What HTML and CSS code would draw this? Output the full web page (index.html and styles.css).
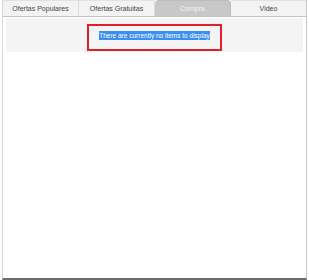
FILE: index.html
```html
<!DOCTYPE html>
<html lang="es">
<head>
    <meta charset="UTF-8">
    <title>Ofertas</title>
    <link rel="stylesheet" href="styles.css">
</head>
<body>
    <div class="panel">
        <ul class="tabs">
            <li class="tab">Ofertas Populares</li>
            <li class="tab">Ofertas Gratuitas</li>
            <li class="tab active">Compra</li>
            <li class="tab">Video</li>
        </ul>
        <div class="content">
            <div class="strip">
                <div class="empty-box">
                    <span class="selected">There are currently no items to display</span>
                </div>
            </div>
        </div>
    </div>
</body>
</html>
```

FILE: styles.css
```css
* {
    margin: 0;
    padding: 0;
    box-sizing: border-box;
}

body {
    font-family: 'Liberation Sans', Arial, sans-serif;
    background: #fff;
    width: 309px;
    height: 280px;
    overflow: hidden;
}

.panel {
    margin: 0 2px;
    height: 280px;
    border-left: 1px solid #d8d8d8;
    border-right: 1px solid #c8c8c8;
    border-bottom: 2px solid #6d6d6d;
    display: flex;
    flex-direction: column;
}

.tabs {
    list-style: none;
    display: flex;
    height: 17px;
    border-bottom: 1px solid #c4c4c4;
}

.tab {
    flex: 1;
    display: flex;
    align-items: center;
    justify-content: center;
    font-size: 7px;
    color: #444;
    background: #f3f3f3;
    border-right: 1px solid #dcdcdc;
    border-top: 1px solid #e2e2e2;
    white-space: nowrap;
}

.tab:last-child {
    border-right: none;
}

.tab.active {
    background: #c8c8c8;
    color: #f4f4f4;
    border-radius: 4px 4px 0 0;
    border-color: #bdbdbd;
}

.content {
    flex: 1;
    padding: 1px 3px;
}

.strip {
    background: #f4f4f4;
    height: 34px;
    display: flex;
    justify-content: center;
    padding-top: 6px;
}

.empty-box {
    width: 135px;
    height: 27px;
    border: 2px solid #e2202c;
    display: flex;
    align-items: center;
    justify-content: center;
    padding-bottom: 5px;
}

.selected {
    background: #3a8ff0;
    color: #fff;
    font-size: 6.5px;
    line-height: 9px;
    white-space: nowrap;
}
```
